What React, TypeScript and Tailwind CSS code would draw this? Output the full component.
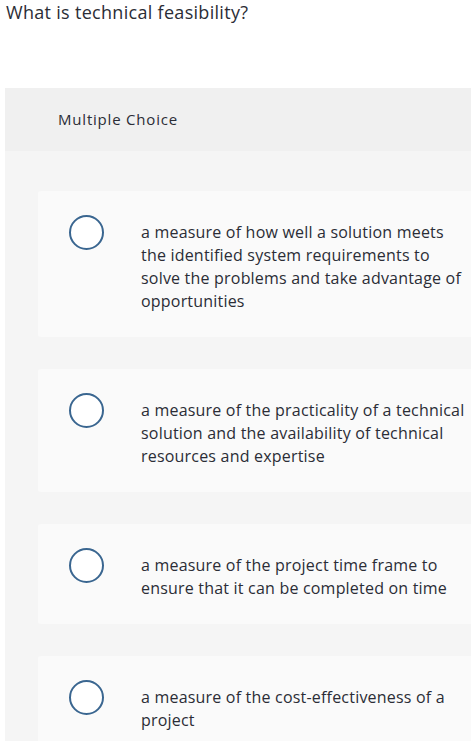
import React from "react";

const options = [
  "a measure of how well a solution meets the identified system requirements to solve the problems and take advantage of opportunities",
  "a measure of the practicality of a technical solution and the availability of technical resources and expertise",
  "a measure of the project time frame to ensure that it can be completed on time",
  "a measure of the cost-effectiveness of a project",
];

export default function App() {
  return (
    <div
      className="min-h-[741px] bg-white text-[#2b2d36] overflow-hidden"
      style={{ fontFamily: "'Open Sans', sans-serif" }}
    >
      <h1 className="pl-[6px] pt-[0px] text-[18px] leading-[24px] font-normal tracking-[0.3px]">
        What is technical feasibility?
      </h1>
      <div className="ml-[5px] mt-[64px] bg-[#f5f5f5]">
        <div className="h-[63px] bg-[#f0f0f0] pl-[53px] flex items-center text-[15px] tracking-[0.8px]">
          Multiple Choice
        </div>
        <div className="pt-[40px] pl-[33px] flex flex-col gap-[32px]">
          {options.map((o, i) => (
            <div key={i} className="bg-[#fafafa] rounded-l-[3px] flex items-start pt-[30px] pb-[24px] pl-[31px]">
              <div className="mt-[-6px] w-[35px] h-[35px] shrink-0 rounded-full border-2 border-[#3a6690] bg-white" />
              <div className="ml-[37px] w-[328px] text-[16px] leading-[23px] tracking-[0.2px]">{o}</div>
            </div>
          ))}
        </div>
      </div>
    </div>
  );
}
